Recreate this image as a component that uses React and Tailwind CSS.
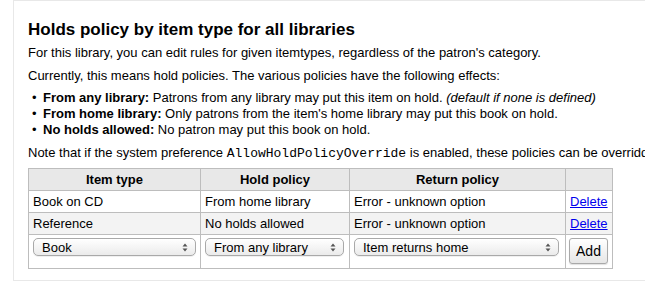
import React from "react";

function Arrows() {
  return (
    <svg width="6" height="9" viewBox="0 0 6 9" className="shrink-0">
      <path d="M3 0.5 L5.5 3.5 L0.5 3.5 Z" fill="#555" />
      <path d="M3 8.5 L5.5 5.5 L0.5 5.5 Z" fill="#555" />
    </svg>
  );
}

function FakeSelect({ label, w }) {
  return (
    <div
      className={`flex items-center justify-between h-[18px] rounded-[5px] border border-[#a9a9a9] bg-gradient-to-b from-white to-[#ebebeb] pl-[8px] pr-[7px] text-[13px] leading-none text-black shadow-[0_1px_0_rgba(0,0,0,0.06)] ${w}`}
    >
      <span>{label}</span>
      <Arrows />
    </div>
  );
}

export default function App() {
  const td = "border border-[#bdbdbd] px-[4px] h-[22px] align-middle";
  const th = "border border-[#bdbdbd] h-[22px] font-bold text-center align-middle bg-[#e8e8e8]";
  return (
    <div
      className="w-[645px] h-[304px] overflow-hidden bg-white text-[13px] text-black"
      style={{ fontFamily: '"Liberation Sans", Arial, Helvetica, sans-serif' }}
    >
      <div className="ml-[13px] w-[700px] h-[281px] border border-[#e8e8e8] pl-[14px] pt-[19px]">
        <h2 className="text-[17px] leading-[20px] font-bold">Holds policy by item type for all libraries</h2>
        <p className="mt-[5px] leading-[16px]">
          For this library, you can edit rules for given itemtypes, regardless of the patron's category.
        </p>
        <p className="mt-[7px] leading-[16px]">
          Currently, this means hold policies. The various policies have the following effects:
        </p>
        <ul className="mt-[6px] leading-[16px]">
          <li className="flex">
            <span className="w-[15px] pl-[4px]">•</span>
            <span>
              <b>From any library:</b> Patrons from any library may put this item on hold.{" "}
              <i>(default if none is defined)</i>
            </span>
          </li>
          <li className="flex">
            <span className="w-[15px] pl-[4px]">•</span>
            <span>
              <b>From home library:</b> Only patrons from the item's home library may put this book on hold.
            </span>
          </li>
          <li className="flex">
            <span className="w-[15px] pl-[4px]">•</span>
            <span>
              <b>No holds allowed:</b> No patron may put this book on hold.
            </span>
          </li>
        </ul>
        <p className="mt-[7px] leading-[16px] whitespace-nowrap">
          Note that if the system preference{" "}
          <code className="text-[13px]" style={{ fontFamily: '"Liberation Mono", "Courier New", monospace' }}>
            AllowHoldPolicyOverride
          </code>{" "}
          is enabled, these policies can be overridden by your circulation staff.
        </p>
        <table className="mt-[6px] border-collapse table-fixed w-[584px]">
          <colgroup>
            <col className="w-[172px]" />
            <col className="w-[149px]" />
            <col className="w-[216px]" />
            <col className="w-[47px]" />
          </colgroup>
          <thead>
            <tr>
              <th className={th}>Item type</th>
              <th className={th}>Hold policy</th>
              <th className={th}>Return policy</th>
              <th className={th}></th>
            </tr>
          </thead>
          <tbody>
            <tr className="bg-white">
              <td className={td}>Book on CD</td>
              <td className={td}>From home library</td>
              <td className={td}>Error - unknown option</td>
              <td className={td}>
                <a href="#" className="text-[#0000ee] underline">Delete</a>
              </td>
            </tr>
            <tr className="bg-[#f3f3f3]">
              <td className={td}>Reference</td>
              <td className={td}>No holds allowed</td>
              <td className={td}>Error - unknown option</td>
              <td className={td}>
                <a href="#" className="text-[#0000ee] underline">Delete</a>
              </td>
            </tr>
            <tr className="bg-white">
              <td className="border border-[#bdbdbd] px-[4px] pt-[3px] h-[34px] align-top">
                <FakeSelect label="Book" w="w-[163px]" />
              </td>
              <td className="border border-[#bdbdbd] px-[4px] pt-[3px] h-[34px] align-top">
                <FakeSelect label="From any library" w="w-[139px]" />
              </td>
              <td className="border border-[#bdbdbd] px-[4px] pt-[3px] h-[34px] align-top">
                <FakeSelect label="Item returns home" w="w-[205px]" />
              </td>
              <td className="border border-[#bdbdbd] px-[3px] pt-[3px] h-[34px] align-top">
                <div className="flex items-center justify-center w-[39px] h-[26px] rounded-[3px] border border-[#a9a9a9] bg-gradient-to-b from-white to-[#e6e6e6] text-[14px] shadow-[0_1px_1px_rgba(0,0,0,0.12)]">
                  Add
                </div>
              </td>
            </tr>
          </tbody>
        </table>
      </div>
    </div>
  );
}
